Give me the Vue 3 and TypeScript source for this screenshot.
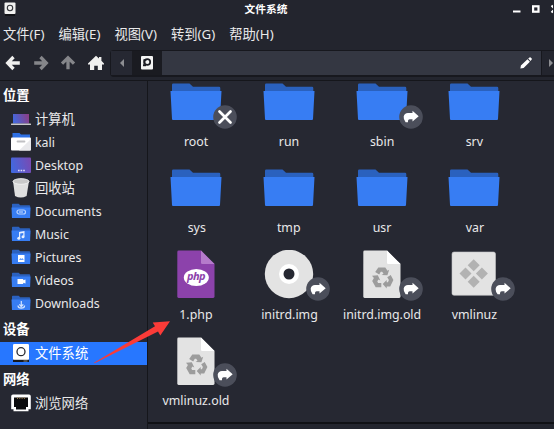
<script setup lang="ts">
type Kind = 'folder' | 'php' | 'disc' | 'recycle' | 'binary'
interface Entry { name: string; kind: Kind; badge?: 'link' | 'locked' }
interface Place { name: string; icon: string; active?: boolean }
interface Section { title: string; places: Place[] }

const menus: string[] = ['文件(F)', '编辑(E)', '视图(V)', '转到(G)', '帮助(H)']

const sections: Section[] = [
  {
    title: '位置',
    places: [
      { name: '计算机', icon: 'computer' },
      { name: 'kali', icon: 'home' },
      { name: 'Desktop', icon: 'desktop' },
      { name: '回收站', icon: 'trash' },
      { name: 'Documents', icon: 'documents' },
      { name: 'Music', icon: 'music' },
      { name: 'Pictures', icon: 'pictures' },
      { name: 'Videos', icon: 'videos' },
      { name: 'Downloads', icon: 'downloads' },
    ],
  },
  { title: '设备', places: [{ name: '文件系统', icon: 'disk', active: true }] },
  { title: '网络', places: [{ name: '浏览网络', icon: 'network' }] },
]

const folderIcons = ['documents', 'music', 'pictures', 'videos', 'downloads']

// Latin names are set slightly condensed; CJK names keep their natural width.
const isLatin = (name: string): boolean => /^[\x20-\x7e]+$/.test(name)

const entries: Entry[] = [
  { name: 'root', kind: 'folder', badge: 'locked' },
  { name: 'run', kind: 'folder' },
  { name: 'sbin', kind: 'folder', badge: 'link' },
  { name: 'srv', kind: 'folder' },
  { name: 'sys', kind: 'folder' },
  { name: 'tmp', kind: 'folder' },
  { name: 'usr', kind: 'folder' },
  { name: 'var', kind: 'folder' },
  { name: '1.php', kind: 'php' },
  { name: 'initrd.img', kind: 'disc', badge: 'link' },
  { name: 'initrd.img.old', kind: 'recycle', badge: 'link' },
  { name: 'vmlinuz', kind: 'binary', badge: 'link' },
  { name: 'vmlinuz.old', kind: 'recycle', badge: 'link' },
]
</script>

<template>
  <div class="window">
    <header class="titlebar">
      <svg class="app-icon" width="12" height="14" viewBox="0 0 12 14">
        <rect x="0.5" y="0.5" width="11" height="11.5" rx="1" fill="#f1f1f0" />
        <circle cx="6" cy="6" r="2.7" fill="none" stroke="#34363b" stroke-width="1.1" />
        <path d="M1 13h10" stroke="#0e0f12" stroke-width="1.6" />
      </svg>
      <span class="title">文件系统</span>
      <svg class="controls" width="42" height="18" viewBox="0 0 42 18">
        <path d="M2 11.5h7.500" stroke="#fff" stroke-width="2" />
        <rect x="22.100" y="6.300" width="5.400" height="5.400" fill="none" stroke="#fff" stroke-width="2.200" />
        <path d="M40.500 5.500l7 7M47.500 5.500l-7 7" stroke="#fff" stroke-width="2" />
      </svg>
    </header>

    <nav class="menubar">
      <span v-for="m in menus" :key="m" class="menu">{{ m }}</span>
    </nav>

    <div class="toolbar">
      <div class="nav">
        <svg width="16" height="16" viewBox="0 0 16 16"><path d="M8.500 2L2.700 8l5.800 6M3 8h11.800" fill="none" stroke="#f0f0ef" stroke-width="3.300" /></svg>
        <svg width="16" height="16" viewBox="0 0 16 16"><path d="M7.500 2l5.800 6-5.800 6M13 8H1.200" fill="none" stroke="#85868a" stroke-width="3.300" /></svg>
        <svg width="16" height="16" viewBox="0 0 16 16"><path d="M2 8.600l6-5.800 6 5.800M8 3v11.300" fill="none" stroke="#85868a" stroke-width="3.300" /></svg>
        <svg width="16" height="16" viewBox="0 0 16 16"><path d="M8 .8l3 2.800V2h2.400v3.800L16 8.600v1h-2V15H9.800v-4.200H6.200V15H2V9.600H0v-1z" fill="#f0f0ef" /></svg>
      </div>
      <div class="pathbar">
        <span class="path-back"><svg width="6" height="10" viewBox="0 0 6 10"><path d="M5 1v8L1 5z" fill="#8d8e92" /></svg></span>
        <span class="path-root">
          <svg width="12" height="14" viewBox="0 0 12 14">
            <rect width="12" height="13.500" rx="1" fill="#f3f3f2" />
            <rect x="2" y="8.200" width="3" height="2" fill="#1b1c22" />
            <circle cx="6.300" cy="6" r="2.900" fill="none" stroke="#1b1c22" stroke-width="1.700" />
            <path d="M2.400 3.200h3v1.600h-1.200v3H2.400z" fill="#1b1c22" />
          </svg>
        </span>
        <span class="path-field">
          <svg width="12" height="12" viewBox="0 0 12 12"><path d="M.4 11.600l.5-3 6.600-6.300 2.400 2.400-6.300 6.300zM8.200 1.600L9.500.4q.6-.4 1.100 0l1.100 1.200q.4.500 0 1l-1.200 1.300z" fill="#fff" /></svg>
        </span>
      </div>
      <span class="path-next"><svg width="6" height="10" viewBox="0 0 6 10"><path d="M1 1v8l4-4z" fill="#8d8e92" /></svg></span>
    </div>

    <main class="body">
      <aside class="sidebar">
        <section v-for="s in sections" :key="s.title">
          <h2>{{ s.title }}</h2>
          <div v-for="p in s.places" :key="p.name" class="place" :class="{ active: p.active }">
            <svg width="22" height="20" viewBox="0 0 22 20">
              <defs>
                <linearGradient :id="'g-' + p.icon" x1="0" x2="1" y1=".6" y2=".4">
                  <stop offset="0" stop-color="#4169e0" />
                  <stop offset="1" :stop-color="p.icon === 'computer' ? '#893f88' : '#774bb4'" />
                </linearGradient>
              </defs>
              <template v-if="p.icon === 'computer'">
                <rect x="3" y="5" width="16" height="9.500" fill="url(#g-computer)" />
                <rect x="1" y="14.500" width="20" height="1.400" rx=".5" fill="#c9c9cb" />
              </template>
              <template v-else-if="p.icon === 'home'">
                <path d="M2.500 1h7l1.500 1.500h9V8h-17.500z" fill="#2e70e4" />
                <rect x="1" y="5.500" width="20" height="13" rx="1" fill="#fff" />
                <path d="M21 7v10.500a1 1 0 0 1-1 1H9z" fill="#e9e9ec" />
                <path d="M7.500 9.500h7" stroke="#c0c0c3" stroke-width="1.800" stroke-linecap="round" />
              </template>
              <template v-else-if="p.icon === 'desktop'">
                <rect x="1" y="2.500" width="20" height="15.500" rx="1" fill="url(#g-desktop)" />
                <path d="M8 15.500h7" stroke="#e2def8" stroke-width="1.500" stroke-dasharray="1.600 1" />
              </template>
              <template v-else-if="p.icon === 'trash'">
                <path d="M3 3l2 15q5.800 3 11.600 0L19 3z" fill="#dfdfdf" />
                <ellipse cx="11" cy="3.500" rx="8" ry="2.800" fill="#c9c9c9" stroke="#efefef" stroke-width="1" />
              </template>
              <template v-else-if="folderIcons.includes(p.icon)">
                <path d="M2 3.500q0-.7.700-.7h6l1.500 1.500h9q1 0 1 1V10H2z" fill="#2b61bf" />
                <path d="M1.500 6.500h19l-.4 10.500H2z" fill="#377df3" />
                <g v-if="p.icon === 'documents'" fill="none" stroke="#b8d3ff" stroke-width="1.200">
                  <rect x="7" y="9" width="8.500" height="4" rx="2" /><path d="M9 11h4" />
                </g>
                <g v-else-if="p.icon === 'music'" fill="#e7f0ff">
                  <path d="M9 8l5.500-1v5.500h-1.200V9l-3.100.6v5H9z" /><circle cx="8.800" cy="14.300" r="1.500" /><circle cx="13" cy="12.800" r="1.500" />
                </g>
                <g v-else-if="p.icon === 'pictures'">
                  <rect x="8" y="8" width="6.500" height="7" fill="#fff" /><path d="M9 13l1.500-2 1 1 1-1 1.300 2z" fill="#65a0ff" />
                </g>
                <path v-else-if="p.icon === 'videos'" d="M7.500 9h5.700v1.200l2.300-.7v4l-2.300-.7V14H7.500z" fill="#fff" />
                <path v-else d="M11.300 8v5.500M9.300 11.300l2 2.200 2-2.200M8 12.500c0 3.500 6.600 3.500 6.600 0" fill="none" stroke="#d2e3ff" stroke-width="1.200" />
              </template>
              <template v-else-if="p.icon === 'disk'">
                <rect x="3" y="1" width="16" height="16" rx="1.300" fill="#fff" />
                <circle cx="11" cy="8.700" r="4" fill="none" stroke="#282a31" stroke-width="1.300" />
                <rect x="3" y="16.800" width="16" height="2.200" fill="#17181d" />
                <path d="M13.500 18h4" stroke="#aaa" stroke-width=".8" />
              </template>
              <template v-else>
                <path d="M3 1.500h16a1.800 1.800 0 0 1 1.800 1.800v13h-2.300v1.900h-15v-1.900H1.200v-13A1.800 1.800 0 0 1 3 1.500z" fill="#fff" />
                <path d="M4 4.500h14V14h-2v2.500H6V14H4z" fill="#0b0b0d" />
                <path d="M7 5.300h8.500" stroke="#93764b" stroke-width="1.600" stroke-dasharray="1 1.300" />
              </template>
            </svg>
            <span class="place-name" :class="{ latin: isLatin(p.name) }">{{ p.name }}</span>
          </div>
        </section>
      </aside>

      <div class="pane">
        <div class="view">
          <div class="grid">
            <div v-for="e in entries" :key="e.name" class="entry">
              <div class="thumb">
                <svg width="52" height="50" viewBox="0 0 52 50">
                  <template v-if="e.kind === 'folder'">
                    <path d="M2 6.700q0-1.300 1.300-1.300h16.200L23 8.700h26q1.300 0 1.300 1.300V16.700H2z" fill="#2a61be" />
                    <path d="M.5 13h51L50 41q0 1-1 1H3q-1 0-1-1z" fill="#377df3" />
                  </template>
                  <template v-else-if="e.kind === 'php'">
                    <path d="M8.600 .6H31l13.500 13.500V46.600q0 1.300-1.300 1.300H8.600q-1.300 0-1.300-1.300V1.900Q7.300 .6 8.600 .6z" fill="#8c42ab" />
                    <path d="M31 .6l13.500 13.500H32.300q-1.300 0-1.300-1.300z" fill="#b57bcb" />
                    <ellipse cx="26.300" cy="27.500" rx="12.500" ry="8.600" fill="#fff" />
                    <text x="26" y="30.300" text-anchor="middle" class="php-text">php</text>
                  </template>
                  <template v-else-if="e.kind === 'disc'">
                    <circle cx="26" cy="24" r="24.200" fill="#e3e3e3" />
                    <circle cx="26" cy="24" r="10" fill="#fff" />
                    <circle cx="26" cy="24" r="5.500" fill="#262832" />
                  </template>
                  <template v-else-if="e.kind === 'recycle'">
                    <path d="M8.600 .6H31l13.500 13.500V46.600q0 1.300-1.300 1.300H8.600q-1.300 0-1.300-1.300V1.900Q7.300 .6 8.600 .6z" fill="#e3e3e3" />
                    <path d="M31 .6l13.500 13.500H32.300q-1.300 0-1.300-1.300z" fill="#fff" />
                    <g fill="#9c9c9c">
                      <path d="M22.300 17.500h7l2.200 3.300 1.700-1-1.800 5.500-5.800-.4 1.900-1.200-1.300-2h-1.400l-1.600 2.700-4-2.400z" />
                      <path d="M16 25.700l5.800-.4 2.500 5.200-2-.9-1 2 .8 1.400h3.200v4.300h-5.600l-3.500-6.200 1.700-3.100z" />
                      <path d="M34.700 25l2.700 5-3.200 6.500h-3.500v2l-4-4.500 4-4v2.200h1.200l1-2.200-1.700-2.700z" />
                    </g>
                  </template>
                  <template v-else>
                    <rect x="4" y="2" width="43.500" height="43.300" rx="2" fill="#e3e3e3" stroke="#c5c5c6" stroke-width=".6" />
                    <g fill="#b2b2b2">
                      <path d="M25.700 9.300l6 6-6 6-6-6z" />
                      <path d="M17.500 17.500l6 6-6 6-6-6z" />
                      <path d="M33.900 17.500l6 6-6 6-6-6z" />
                      <path d="M25.700 25.700l6 6-6 6-6-6z" />
                    </g>
                  </template>
                </svg>
                <svg v-if="e.badge" class="badge" width="24" height="24" viewBox="0 0 24 24">
                  <circle cx="12" cy="12" r="11.800" fill="#4b4e5a" />
                  <path v-if="e.badge === 'locked'" d="M6.500 6.500l11 11M17.500 6.500l-11 11" stroke="#fff" stroke-width="2.700" stroke-linecap="round" />
                  <path v-else d="M13.500 5.800l6.200 5.500-6.200 5.300v-2.400h-2.700q-2.100 0-1.800 3H6.600Q4.300 14.500 4.700 11.500 5.400 8.300 9 8.100h4.500z" fill="#fff" />
                </svg>
              </div>
              <span class="label">{{ e.name }}</span>
            </div>
          </div>
        </div>
        <footer class="status"></footer>
      </div>
    </main>

    <svg class="pointer" width="78" height="44" viewBox="0 0 78 44">
      <path d="M1 42.800L62 6.200l-2.300-3.800L77 1.200 67.300 15.500 65 11.500 1.500 43.300z" fill="#fb3b38" />
    </svg>
  </div>
</template>

<style>
body {
  background: #23252e;
  overflow: hidden;
}
</style>

<style scoped>
.window {
  position: relative;
  display: flex;
  flex-direction: column;
  width: 554px;
  height: 429px;
  overflow: hidden;
  background: #23252e;
  color: #e9e9ea;
  font: 13.3px/20px "Noto Sans", "Noto Sans CJK SC", sans-serif;
}
svg {
  display: block;
  flex: none;
}
.titlebar {
  display: grid;
  grid-template-columns: 42px 1fr 42px;
  height: 18px;
  align-items: center;
}
.app-icon {
  margin-left: 4px;
}
.controls {
  margin-left: -1px;
}
.title {
  text-align: center;
  padding-right: 22px;
  font-size: 10.7px;
  font-weight: 700;
  line-height: 18px;
  color: #fff;
}
.menubar {
  display: flex;
  height: 32px;
  align-items: center;
  gap: 14px;
  padding-left: 3px;
  white-space: nowrap;
}
.toolbar {
  display: flex;
  height: 30px;
  border-bottom: 1px solid #15161b;
}
.nav {
  display: flex;
  width: 110px;
  gap: 11.5px;
  padding: 5px 0 0 5px;
  box-sizing: border-box;
}
.pathbar {
  display: flex;
  width: 432px;
  height: 27px;
  box-sizing: border-box;
  border: 1px solid #17181e;
  border-bottom-width: 2px;
  border-radius: 4px 0 0 4px;
}
.path-back,
.path-root,
.path-next {
  display: flex;
  align-items: center;
  justify-content: center;
}
.path-back {
  width: 21px;
  background: #262832;
}
.path-root {
  width: 30px;
  background: #1a1b21;
}
.path-field {
  display: flex;
  flex: 1;
  align-items: center;
  justify-content: flex-end;
  padding-right: 9px;
  background: #343742;
}
.path-next {
  width: 12px;
  height: 27px;
  padding-left: 5px;
  box-sizing: border-box;
  border-top: 1px solid #17181e;
  border-bottom: 2px solid #17181e;
}
.body {
  display: flex;
  flex: 1;
  min-height: 0;
}
.sidebar {
  width: 147px;
  border-right: 1px solid #15161b;
  background: #262832;
}
h2 {
  margin: 0;
  padding-left: 3px;
  height: 27px;
  font-size: 13.3px;
  line-height: 28px;
  font-weight: 700;
  color: #fff;
}
section:first-child h2 {
  height: 26px;
}
.place {
  display: flex;
  height: 23.1px;
  align-items: center;
  gap: 3.5px;
  padding-left: 9.5px;
  white-space: nowrap;
}
.place-name.latin {
  transform: scaleX(0.93);
  transform-origin: left;
}
.active {
  background: #2777ff;
  color: #fff;
}
.pane {
  display: flex;
  flex: 1;
  flex-direction: column;
  min-width: 0;
}
.view {
  flex: 1;
  overflow: hidden;
  background: #262832;
}
.grid {
  display: grid;
  grid-template-columns: repeat(4, 92.7px);
  grid-auto-rows: 86.2px;
  margin: -3px 0 0 2px;
}
.entry {
  display: flex;
  flex-direction: column;
  align-items: center;
}
.thumb {
  position: relative;
  width: 52px;
  height: 50px;
}
.badge {
  position: absolute;
  left: 42.8px;
  top: 26.6px;
}
.label {
  margin-top: 3.3px;
  white-space: nowrap;
  transform: scaleX(0.93);
}
.status {
  height: 7px;
  box-sizing: border-box;
  border-top: 2px solid #101115;
  background: #23252e;
}
.php-text {
  font: italic 700 11px "Noto Sans", sans-serif;
  letter-spacing: -0.6px;
  fill: #8c42ab;
}
.pointer {
  position: absolute;
  left: 93px;
  top: 320px;
}
</style>
